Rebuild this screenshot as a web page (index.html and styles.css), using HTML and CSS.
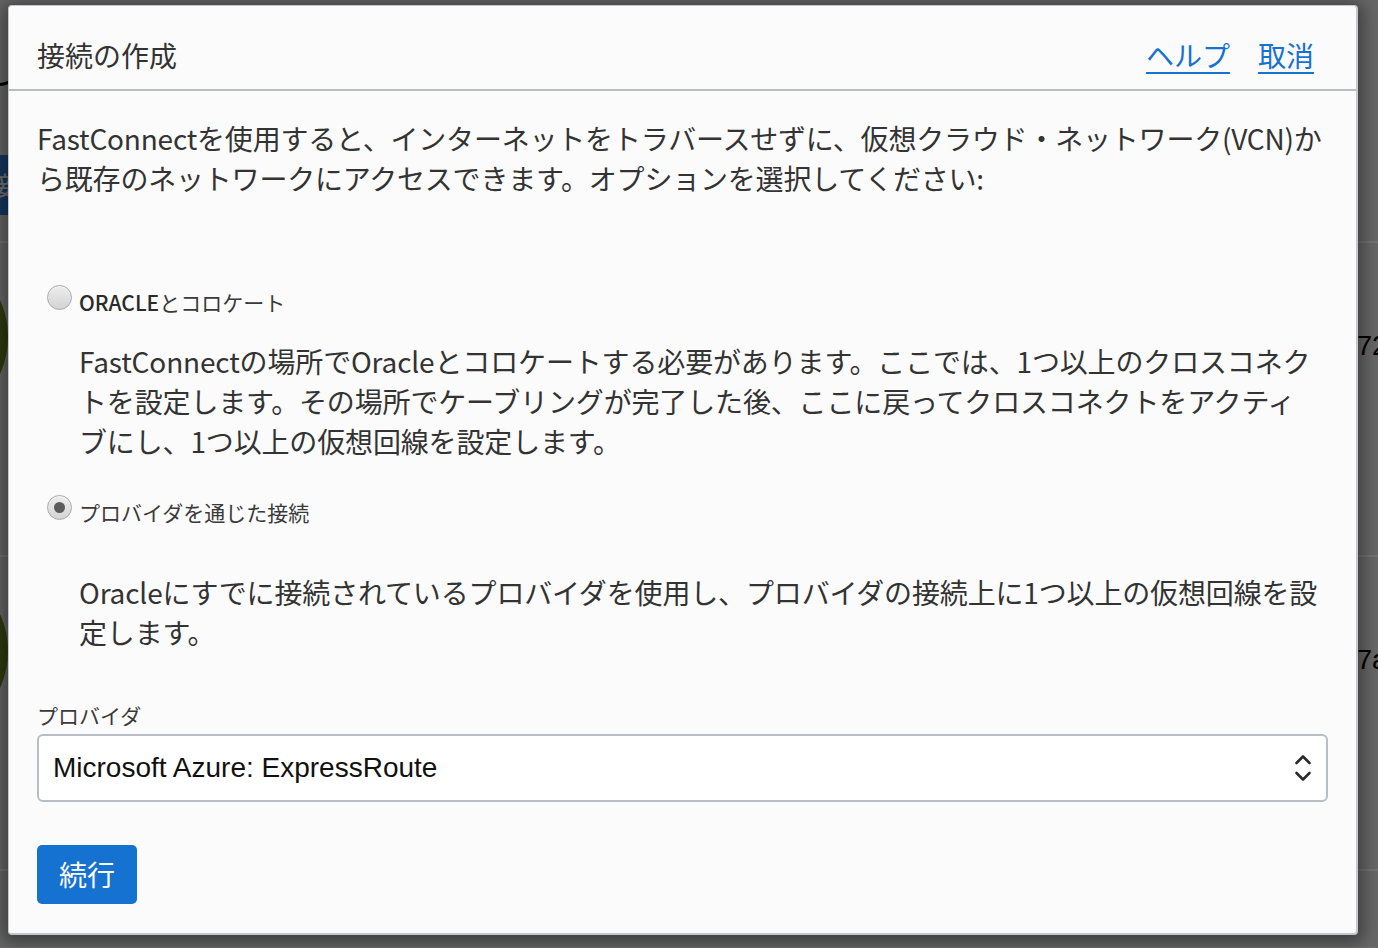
FILE: index.html
```html
<!DOCTYPE html>
<html lang="ja">
<head>
<meta charset="utf-8">
<title>接続の作成</title>
<link rel="stylesheet" href="styles.css">
</head>
<body>
<div class="page">
  <div class="row row-top">
    <div class="top-curve"></div>
    <div class="nav-btn">接</div>
  </div>
  <div class="row">
    <div class="avatar"></div>
    <div class="cell-text">72</div>
  </div>
  <div class="row">
    <div class="avatar"></div>
    <div class="cell-text">7a</div>
  </div>
  <div class="row row-last"></div>
</div>
<div class="scrim"></div>

<div class="dialog" role="dialog" aria-labelledby="dlg-title">
  <header class="dialog-header">
    <h1 id="dlg-title" class="dialog-title">接続の作成</h1>
    <nav class="dialog-links">
      <a href="#" class="link">ヘルプ</a>
      <a href="#" class="link">取消</a>
    </nav>
  </header>
  <div class="dialog-body">
    <p class="intro">FastConnectを使用すると、インターネットをトラバースせずに、仮想クラウド・ネットワーク(VCN)か<br>ら既存のネットワークにアクセスできます。オプションを選択してください:</p>

    <div class="options">
      <label class="option-head">
        <span class="radio"></span>
        <span class="option-label"><span class="caps">ORACLE</span>とコロケート</span>
      </label>
      <p class="option-desc desc-1">FastConnectの場所でOracleとコロケートする必要があります。ここでは、1つ以上のクロスコネク<br>トを設定します。その場所でケーブリングが完了した後、ここに戻ってクロスコネクトをアクティ<br>ブにし、1つ以上の仮想回線を設定します。</p>

      <label class="option-head option-2">
        <span class="radio checked"></span>
        <span class="option-label">プロバイダを通じた接続</span>
      </label>
      <p class="option-desc desc-2">Oracleにすでに接続されているプロバイダを使用し、プロバイダの接続上に1つ以上の仮想回線を設<br>定します。</p>
    </div>

    <div class="field">
      <div class="field-label">プロバイダ</div>
      <div class="select">
        <span class="select-value">Microsoft Azure: ExpressRoute</span>
        <svg class="chevrons" width="18" height="32" viewBox="0 0 18 32" aria-hidden="true">
          <path d="M2.5 11 L9 4.5 L15.5 11" fill="none" stroke="#2b2b2b" stroke-width="2.6" stroke-linecap="round" stroke-linejoin="round"/>
          <path d="M2.5 21 L9 27.5 L15.5 21" fill="none" stroke="#2b2b2b" stroke-width="2.6" stroke-linecap="round" stroke-linejoin="round"/>
        </svg>
      </div>
    </div>

    <button class="btn-primary" type="button">続行</button>
  </div>
</div>
</body>
</html>
```

FILE: styles.css
```css
html, body {
  margin: 0;
  padding: 0;
}

body {
  width: 1378px;
  height: 948px;
  overflow: hidden;
  background: #f4f4f4;
  font-family: "Noto Sans CJK JP", "Noto Sans", sans-serif;
  position: relative;
}

/* underlying page */
.page {
  display: flex;
  flex-direction: column;
  height: 948px;
  overflow: hidden;
}

.row {
  flex: none;
  height: 312px;
  border-bottom: 2px solid #ffffff;
  background: #e4e4e4;
  display: flex;
  align-items: flex-start;
  overflow: hidden;
}

.row-top {
  height: 241px;
  flex-direction: column;
}

.row-last {
  height: 76px;
  border-bottom: none;
}

.top-curve {
  width: 40px;
  height: 40px;
  margin: 40px 0 0 -24px;
  border: 3px solid transparent;
  border-bottom-color: #000;
  border-radius: 50%;
}

.nav-btn {
  margin-top: 69px;
  width: 40px;
  height: 60px;
  margin-left: -26px;
  background: #2f7bd4;
  color: #fff;
  font-size: 26px;
  line-height: 60px;
  text-align: right;
}

.avatar {
  flex: none;
  width: 180px;
  height: 180px;
  border-radius: 50%;
  background: #6a841f;
  margin: 4px 0 0 -172px;
}

.cell-text {
  margin: 88px 0 0 1349px;
  font-family: "Liberation Sans", sans-serif;
  font-size: 27px;
  color: #000;
  white-space: nowrap;
}

.scrim {
  position: absolute;
  inset: 0;
  background: rgba(0, 0, 0, 0.55);
}

/* dialog */
.dialog {
  position: absolute;
  left: 8px;
  top: 5px;
  width: 1350px;
  height: 930px;
  background: #fbfbfc;
  border: 1px solid #c3c6cd;
  border-right-width: 2px;
  border-bottom-width: 2px;
  border-radius: 4px;
  box-shadow: 0 3px 16px 6px rgba(0, 0, 0, 0.38);
  box-sizing: border-box;
  color: #333333;
  display: flex;
  flex-direction: column;
}

.dialog-header {
  height: 83px;
  flex: none;
  display: flex;
  align-items: center;
  justify-content: space-between;
  padding: 0 42px 0 28px;
  border-bottom: 2px solid #b8bcc4;
  box-sizing: content-box;
}

.dialog-title {
  margin: 0;
  font-size: 28px;
  font-weight: 400;
  color: #333333;
  line-height: 40px;
  padding-top: 14px;
}

.dialog-links {
  display: flex;
  gap: 28px;
  padding-top: 14px;
}

.link {
  font-size: 28px;
  line-height: 40px;
  color: #1672d0;
  text-decoration: underline;
  text-underline-offset: 5px;
  text-decoration-thickness: 2px;
}

.dialog-body {
  padding: 27px 28px 0 28px;
  display: flex;
  flex-direction: column;
  align-items: flex-start;
}

.intro {
  margin: 0;
  font-size: 28px;
  line-height: 40px;
  white-space: nowrap;
  letter-spacing: -0.2px;
  color: #333333;
}

.options {
  margin-top: 87px;
  display: flex;
  flex-direction: column;
  align-self: stretch;
}

.option-head {
  display: flex;
  align-items: flex-start;
  gap: 7px;
  padding-left: 10px;
  height: 36px;
}

.option-2 {
  margin-top: 34px;
}

.radio {
  flex: none;
  width: 25px;
  height: 25px;
  box-sizing: border-box;
  border-radius: 50%;
  border: 1px solid #a9a9a9;
  background: linear-gradient(#ececec, #d4d4d4);
  box-shadow: inset 0 1px 1px rgba(255, 255, 255, 0.8);
  display: flex;
  align-items: center;
  justify-content: center;
}

.radio.checked::after {
  content: "";
  width: 11px;
  height: 11px;
  border-radius: 50%;
  background: #5a5a5a;
}

.option-label {
  font-size: 21px;
  line-height: 35px;
  color: #3a3a3a;
  white-space: nowrap;
}

.caps {
  font-weight: 500;
  color: #2a2a2a;
}

.option-desc {
  margin: 0;
  padding-left: 42px;
  font-size: 28px;
  line-height: 40px;
  white-space: nowrap;
  letter-spacing: -0.15px;
  color: #333333;
}

.desc-1 {
  margin-top: 20px;
}

.desc-2 {
  margin-top: 41px;
}

.field {
  margin-top: 48px;
  align-self: stretch;
  display: flex;
  flex-direction: column;
}

.field-label {
  font-size: 21px;
  line-height: 30px;
  color: #3a3a3a;
}

.select {
  margin-top: 4px;
  height: 68px;
  box-sizing: border-box;
  border: 2px solid #b8bcc4;
  border-radius: 6px;
  background: #ffffff;
  display: flex;
  align-items: center;
  justify-content: space-between;
  padding: 0 14px 0 14px;
}

.select-value {
  font-family: "Liberation Sans", Arial, sans-serif;
  font-size: 28px;
  color: #111111;
}

.chevrons {
  display: block;
}

.btn-primary {
  margin-top: 43px;
  height: 59px;
  padding: 0 22px;
  border: none;
  border-radius: 5px;
  background: #1672d0;
  color: #ffffff;
  font-family: "Noto Sans CJK JP", sans-serif;
  font-size: 28px;
  line-height: 59px;
  cursor: pointer;
}
```
